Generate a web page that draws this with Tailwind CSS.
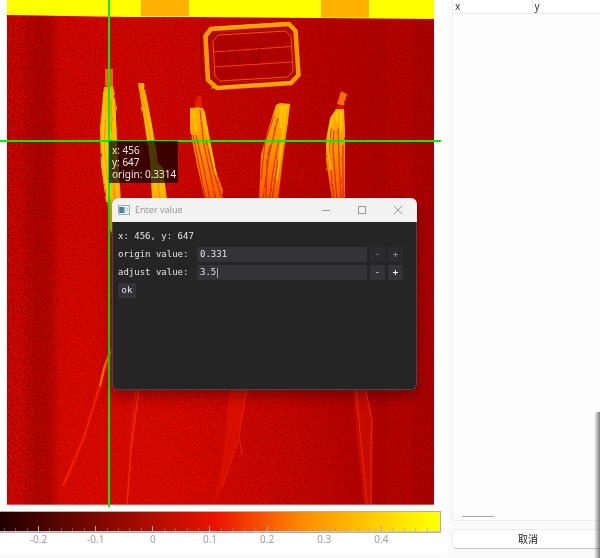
<!DOCTYPE html>
<html lang="en">
<head>
  <meta charset="UTF-8" />
  <meta name="viewport" content="width=device-width, initial-scale=1.0"/>
  <title>Heatmap Viewer</title>
  <script src="https://cdn.jsdelivr.net/npm/@tailwindcss/browser@4"></script>
</head>
<body class="relative flex min-h-screen overflow-hidden bg-[#fafafa] font-['Noto_Sans','Noto_Sans_CJK_SC',sans-serif]">

  <!-- Plot column -->
  <main class="mb-[3px] min-w-0 flex-1 bg-white pr-[6px]">
    <svg class="block w-full" viewBox="0 0 441 508" role="img" aria-label="Heatmap">
      <defs>
        <linearGradient id="base" x1="0" x2="1" y1="0" y2="0">
          <stop offset="0" stop-color="#d00600"/>
          <stop offset=".35" stop-color="#d00600"/>
          <stop offset=".65" stop-color="#be0300"/>
          <stop offset=".88" stop-color="#ae0000"/>
          <stop offset="1" stop-color="#ac0000"/>
        </linearGradient>
        <radialGradient id="warm" cx="0.28" cy="1" r="0.6">
          <stop offset="0" stop-color="#e60d00" stop-opacity=".6"/>
          <stop offset="1" stop-color="#e60d00" stop-opacity="0"/>
        </radialGradient>
        <linearGradient id="band" x1="0" x2="1" y1="0" y2="0">
          <stop offset="0" stop-color="#700000" stop-opacity="0"/>
          <stop offset=".4" stop-color="#700000" stop-opacity=".35"/>
          <stop offset=".8" stop-color="#700000" stop-opacity=".3"/>
          <stop offset="1" stop-color="#700000" stop-opacity="0"/>
        </linearGradient>
        <linearGradient id="leaf" x1="0" x2="0" y1="0" y2="1">
          <stop offset="0" stop-color="#ffb400"/>
          <stop offset=".4" stop-color="#ff9800"/>
          <stop offset="1" stop-color="#f85c00"/>
        </linearGradient>
        <linearGradient id="leafHot" x1="0" x2="0" y1="0" y2="1">
          <stop offset="0" stop-color="#ffac00"/>
          <stop offset=".5" stop-color="#ffc400"/>
          <stop offset="1" stop-color="#ffb800"/>
        </linearGradient>
        <filter id="grain" x="0" y="0" width="100%" height="100%" color-interpolation-filters="sRGB">
          <feTurbulence type="fractalNoise" baseFrequency="0.6" numOctaves="2" seed="4"/>
          <feColorMatrix values="0 0 0 0 0.2  0 0 0 0 0  0 0 0 0 0  1.4 0 0 0 -0.55"/>
        </filter>
        <filter id="spark" x="0" y="0" width="100%" height="100%" color-interpolation-filters="sRGB">
          <feTurbulence type="fractalNoise" baseFrequency="0.6" numOctaves="2" seed="11"/>
          <feColorMatrix values="0 0 0 0 0.95  0 0 0 0 0.08  0 0 0 0 0  0 1.2 0 0 -0.5"/>
        </filter>
        <filter id="soft" x="-20%" y="-20%" width="140%" height="140%" color-interpolation-filters="sRGB">
          <feTurbulence type="fractalNoise" baseFrequency="0.3 0.08" numOctaves="2" seed="7" result="n"/>
          <feDisplacementMap in="SourceGraphic" in2="n" scale="2" xChannelSelector="R" yChannelSelector="G"/>
          <feGaussianBlur stdDeviation="0.6"/>
        </filter>
        <clipPath id="frame"><rect x="7" width="427" height="505"/></clipPath>
      </defs>

      <g clip-path="url(#frame)">
        <rect x="7" width="427" height="505" fill="url(#base)"/>
        <rect x="7" width="427" height="505" fill="url(#warm)"/>
        <rect x="20" y="15" width="40" height="490" fill="url(#band)"/>
        <rect x="387" y="18" width="25" height="487" fill="#c40a00" opacity=".3"/>
        <rect x="7" width="427" height="505" filter="url(#grain)" opacity=".4"/>
        <rect x="7" width="24" height="505" filter="url(#grain)" opacity=".35"/>
        <rect x="7" width="44" height="505" filter="url(#grain)" opacity=".15"/>
        <rect x="7" width="427" height="505" filter="url(#spark)" opacity=".4"/>

        <!-- Top strip -->
        <path d="M7 0H434V19L320 18L190 17L128 17L7 15Z" fill="#ffff00"/>
        <path d="M141 0H189V16H141ZM321 0H369V17.500H321Z" fill="#ffb000"/>
        <path d="M153 0V16M160 0V16M178 0V16M335 0V17M352 0V17" stroke="#ffb60a" stroke-width="2" opacity=".6"/>

        <!-- Label tag -->
        <g fill="none">
          <path d="M211 29L289 24L295.500 31L298.500 75L291 83L217 88L208 80L205.500 36Z" fill="#ac0200" stroke="#ff9d00" stroke-width="4.500"/>
          <path d="M211 27.500L288 22.500M211 88L292 82" stroke="#ffbc00" stroke-width="1"/>
          <path d="M217 32L287 29L292 35L295 72L290 79L219 83L213 77L211 38Z" stroke="#d01800" stroke-width=".8"/>
          <path d="M218 35L286 31L291 37L293 71L288 77L220 81L215 76L213 41Z" stroke="#f25400"/>
          <path d="M213 52L291 46.500M214 67L292 62" stroke="#f44400"/>
          <path d="M222 45L227 49L224 62L231 60M235 47L238 62L243 61M252 50L257 64M260 45L258 62" stroke="#8c0000" stroke-width=".8"/>
          <path d="M201 32L202 77L205 83" stroke="#860000"/>
        </g>

        <!-- Specimens -->
        <g filter="url(#soft)">
          <path d="M105 69H113V86H105Z" fill="#f26400"/>
          <path d="M104 87L113 86L115 95L117 145L121 202H106L101 165L100 128Z" fill="url(#leafHot)"/>
          <path d="M107 200L120 200L116 240L110 230Z" fill="#ff9a00"/>
          <path d="M138 83H144L152 125L158 163L163 168L167 200H152L150 160L144 120Z" fill="url(#leafHot)"/>
          <path d="M194 104L198 96L201 96L203 108H195Z" fill="#e41c00"/>
          <path d="M190 108L202 107L205 112L210 140L215 168L223 190L222 200H205L197 165L190 130Z" fill="url(#leaf)"/>
          <path d="M276 105L280 103L290 104L288 122L284 150L278 200H259L261 155L268 130Z" fill="url(#leaf)"/>
          <path d="M341 91L347 94L344 106L337 104Z" fill="#f66e00"/>
          <path d="M337 105H344V109H336Z" fill="#dc1000"/>
          <path d="M336 109L344 109L345 130L345 200H332L326 160L326 140L330 118Z" fill="url(#leaf)"/>
        </g>
        <g fill="none" stroke="#dc1c00" stroke-width="1.200" opacity=".8" filter="url(#soft)">
          <path d="M111 100L112 160L115 202M105 120L104 150L110 202" stroke="#ff7a00"/>
          <path d="M141 90L155 160L160 200" stroke="#ff8a00"/>
          <path d="M200 110L204 145L216 200M196 135L203 165L210 200M206 140L213 170L221 196M193 135L202 180L206 200"/>
          <path d="M278 118L269 155L263 200M279 140L274 165L269 200M274 116L265 142L261 180M270 145L267 160L266 200M278 160L272 200"/>
          <path d="M334 130L333 150L337 200M338 128L339 160L341 200M331 128L329 150L334 200M343 145V200"/>
        </g>
        <g fill="none" stroke="#ffd000" stroke-width="2" opacity=".85" filter="url(#soft)">
          <path d="M104 92L103 150L108 195M114 100L117 160"/>
          <path d="M194 110L196 132M203 115L211 150L216 175"/>
          <path d="M286 106L282 140L277 180M282 106L281 128"/>
          <path d="M333 116L329 132L328 150L331 170M341 112L341 132M337 112V122"/>
        </g>

        <!-- Lower tips -->
        <g filter="url(#soft)">
          <path d="M111 350L101 382L83 440L63 486" fill="none" stroke="#ee2000" stroke-width="2.500"/>
          <path d="M110 352L104 368L100 386" fill="none" stroke="#ff7400" stroke-width="2"/>
          <path d="M139 388L131 450L127 505" fill="none" stroke="#f02c00" stroke-width="1.500"/>
          <path d="M136 388L130 450" fill="none" stroke="#e02000" stroke-width="1"/>
          <path d="M229 388H248L240 430L225 478L214 505L224 450Z" fill="#dc1200" opacity=".75"/>
          <path d="M247 388L239 435L242 455M238 440L222 488" fill="none" stroke="#e82400"/>
          <path d="M353 388H366L373 420L372 505H364L357 440Z" fill="#d41200" opacity=".6"/>
          <path d="M365 388L372 420L371 445V505M356 390L367 505" fill="none" stroke="#ec2c00"/>
        </g>
        <path d="M7 505H434" stroke="#ee6a60" stroke-width="1.500"/>
      </g>

      <!-- Crosshair -->
      <path d="M109 0V507M0 141H441" stroke="#00f000" stroke-width="2"/>
    </svg>

    <!-- Colour scale -->
    <div class="mt-[3px] border-y border-r border-[#b0b0b0]">
      <div class="flex h-5 flex-col justify-end border-b border-[#c8c8c8] bg-[linear-gradient(90deg,#200000_0%,#ec1200_49%,#ff8c00_69%,#ffff00_98%)]">
        <svg class="block w-full" viewBox="0 0 440 5" aria-hidden="true">
          <path id="minorTicks" stroke="#999" stroke-opacity=".5" fill="none"/>
          <path id="majorTicks" stroke="#aaa" fill="none"/>
        </svg>
      </div>
    </div>
    <div class="grid grid-cols-7 pr-[31px] pl-[10px] text-center text-[10px] leading-[12px] text-[#a0a0a0]">
      <span>-0.2</span><span>-0.1</span><span>0</span><span>0.1</span><span>0.2</span><span>0.3</span><span>0.4</span>
    </div>
  </main>

  <!-- Points list -->
  <aside class="flex w-[153px] shrink-0 flex-col pb-[9px] pl-[5px]">
    <div class="relative flex-1 rounded-bl-sm border-b border-l border-[#ededed] bg-[#fdfdfd]">
      <table class="w-full table-fixed border-collapse bg-white text-left text-[10px] leading-[13px] text-[#333]">
        <thead>
          <tr class="border-b border-[#ececec]">
            <th class="w-[79px] border-r border-[#ececec] px-[2px] font-normal">x</th>
            <th class="px-[2px] font-normal">y</th>
          </tr>
        </thead>
      </table>
      <div class="absolute bottom-[3px] left-[9px] h-px w-8 bg-[#a5a5a5]"></div>
    </div>
    <button class="mt-2 -mr-1 h-5 rounded border border-[#ececec] border-b-[#c8c8c8] bg-white text-[10px] leading-[18px] text-[#222]">取消</button>
  </aside>

  <!-- Cursor readout -->
  <p class="absolute top-[141px] left-[109px] bg-black/70 py-[3px] pr-[2px] pl-[3px] text-[10px] leading-[12px] whitespace-nowrap text-[#e8e8e8]">
    x: 456<br />
    y: 647<br />
    origin: 0.3314
  </p>

  <!-- Enter value dialog -->
  <div role="dialog" aria-labelledby="dialogTitle" class="absolute top-[198px] left-[112px] flex h-[192px] w-[305px] flex-col rounded-md border border-t-0 border-[#484848] bg-[#252525] shadow-[0_6px_14px_rgba(0,0,0,0.35)]">
    <header class="-mx-px flex h-6 items-center rounded-t-md bg-[#f2f2f2] pl-[6px] text-[#999]">
      <svg class="mr-[5px] h-[10px] w-3" viewBox="0 0 12 10" aria-hidden="true">
        <rect x=".5" y=".5" width="11" height="9" fill="#e8eef0" stroke="#a5adb5"/>
        <rect x="1.500" y="2" width="5" height="6" fill="#4a8f8c"/>
        <rect x="1.500" y="2" width="2" height="6" fill="#5577a8"/>
        <path d="M8 3.500H10M8 5.500H10" stroke="#b8c4cc"/>
      </svg>
      <h2 id="dialogTitle" class="flex-1 text-[9px]">Enter value</h2>
      <button aria-label="Minimize" class="flex w-9 justify-center"><svg class="size-2" viewBox="0 0 8 8"><path d="M0 4.500H8" stroke="#999"/></svg></button>
      <button aria-label="Maximize" class="flex w-9 justify-center"><svg class="size-2" viewBox="0 0 8 8"><rect x=".5" y=".5" width="7" height="7" fill="none" stroke="#999"/></svg></button>
      <button aria-label="Close" class="mr-px flex w-9 justify-center"><svg class="size-2" viewBox="0 0 8 8"><path d="M0 0L8 8M8 0L0 8" stroke="#999"/></svg></button>
    </header>
    <form class="flex flex-col gap-[3px] pt-[7px] pr-[13px] pl-[5px] font-['DejaVu_Sans_Mono',monospace] text-[9px] leading-[15px] text-[#e4e4e4]">
      <p>x: 456, y: 647</p>
      <div class="flex gap-[3px]">
        <label for="originValue" class="w-[76px] whitespace-nowrap">origin value:</label>
        <input id="originValue" type="text" value="0.331" class="h-[15px] min-w-0 flex-1 bg-[#333338] px-[3px]" />
        <button type="button" class="w-[15px] bg-[#2b2b2d] text-[#8c8c8c]">-</button>
        <button type="button" class="w-[15px] bg-[#2b2b2d] text-[#a0a0a0]">+</button>
      </div>
      <div class="flex gap-[3px]">
        <label for="adjustValue" class="w-[76px] whitespace-nowrap">adjust value:</label>
        <div class="relative flex min-w-0 flex-1">
          <input id="adjustValue" type="text" value="3.5" class="h-[15px] w-full bg-[#333338] px-[3px]" />
          <span class="absolute top-[3px] left-5 h-[10px] w-px bg-[#aaa]"></span>
        </div>
        <button type="button" class="w-[15px] bg-[#333338]">-</button>
        <button type="button" class="w-[15px] bg-[#333338] font-bold text-white">+</button>
      </div>
      <button type="button" class="w-[18px] bg-[#333338]">ok</button>
    </form>
  </div>

  <!-- Edge shadow of the neighbouring window -->
  <div class="pointer-events-none absolute top-[412px] right-0 bottom-0 w-[6px] rounded-tl bg-linear-to-r from-black/0 to-black/50"></div>

  <script>
    // Scale ticks: every fifth one is a major tick
    const step = 11.43;
    let minor = '';
    let major = '';
    for (let i = -3; i <= 34; i++) {
      const x = Math.round(38 + i * step) + 0.5;
      if (i % 5 === 0) major += `M${x} 0V5`;
      else minor += `M${x} 2V5`;
    }
    document.getElementById('minorTicks').setAttribute('d', minor);
    document.getElementById('majorTicks').setAttribute('d', major);
  </script>

</body>
</html>
